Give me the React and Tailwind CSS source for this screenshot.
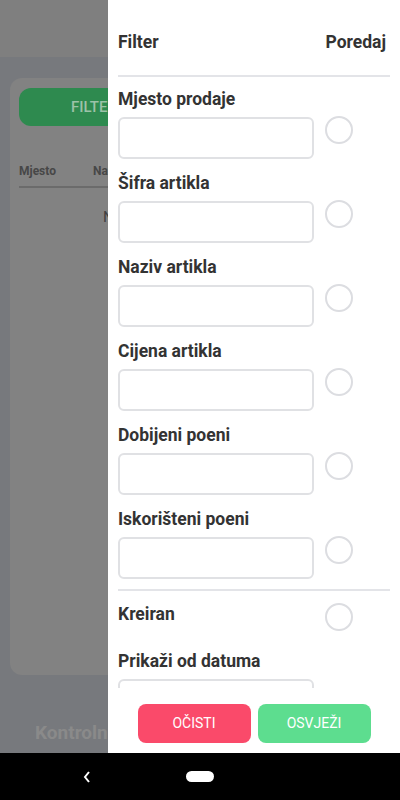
import React from "react";

const fields = [
  "Mjesto prodaje",
  "Šifra artikla",
  "Naziv artikla",
  "Cijena artikla",
  "Dobijeni poeni",
  "Iskorišteni poeni",
];

const Circle = () => (
  <div className="w-[28px] h-[28px] shrink-0 rounded-full border-2 border-[#dcdde1]" />
);

const FieldRow = ({ label, last }) => (
  <div className="flex flex-col">
    <p className="text-[17.5px] leading-[22px] font-bold text-[#333333]">{label}</p>
    <div className={`flex items-start gap-[11px] mt-[7px] ${last ? "mb-[10px]" : "mb-[13px]"}`}>
      <div className="w-[196px] h-[42px] rounded-md border-2 border-[#e0e1e4] bg-white" />
      <div className="-mt-px">
        <Circle />
      </div>
    </div>
  </div>
);

// pozadina aplikacije (zatamnjena ispod drawera)
const Background = () => (
  <div className="flex flex-col h-full bg-[#77797d]">
    <div className="h-[57px] bg-[#7f7f7f] shrink-0" />
    <div className="flex-1 flex flex-col px-[10px] pt-[21px]">
      <div className="h-[597px] rounded-xl bg-[#828282] px-[9px] pt-[10px]">
        <div className="h-[38px] rounded-xl bg-[#2e8a4f] flex items-center pl-[52px]">
          <span className="text-[15px] text-[#9cc2a8] font-medium">FILTER</span>
        </div>
        <div className="flex gap-[37px] mt-[36px] pb-[6px] border-b-2 border-[#6b6b6b]">
          <span className="text-[12px] font-bold text-[#474747]">Mjesto</span>
          <span className="text-[12px] font-bold text-[#474747]">Naziv</span>
        </div>
        <p className="mt-[18px] pl-[84px] text-[15px] text-[#404040]">Nema podataka</p>
      </div>
      <p className="mt-[44px] pl-[25px] text-[19px] font-bold text-[#8a8a8a]">Kontrolna tabla</p>
    </div>
  </div>
);

export default function App() {
  return (
    <div
      className="w-[400px] h-[800px] flex flex-col overflow-hidden"
      style={{ fontFamily: "Roboto, 'Noto Sans', sans-serif" }}
    >
      <div className="relative h-[753px] shrink-0">
        <Background />

        {/* Drawer */}
        <div className="absolute top-0 right-0 w-[292px] h-full bg-white flex flex-col">
          <div className="h-[688px] overflow-hidden px-[10px]">
            <div className="flex justify-between items-center pt-[31px] pb-[22px] border-b-2 border-[#e3e4e8]">
              <span className="text-[17.5px] leading-[22px] font-bold text-[#333333]">Filter</span>
              <span className="text-[17.5px] leading-[22px] font-bold text-[#333333] pr-[4px]">Poredaj</span>
            </div>
            <div className="pt-[11px]">
              {fields.map((f, i) => (
                <FieldRow key={f} label={f} last={i === fields.length - 1} />
              ))}
            </div>
            <div className="border-t-2 border-[#e3e4e8] pt-[12px]">
              <div className="flex items-start">
                <p className="w-[207px] text-[17.5px] leading-[22px] font-bold text-[#333333]">Kreiran</p>
                <Circle />
              </div>
              <p className="mt-[19px] text-[17.5px] leading-[22px] font-bold text-[#333333]">
                Prikaži od datuma
              </p>
              <div className="mt-[7px] w-[196px] h-[42px] rounded-md border-2 border-[#e0e1e4]" />
            </div>
          </div>
          <div className="flex justify-center gap-[7px] pt-[16px]">
            <button className="w-[113px] h-[39px] rounded-lg bg-[#fa4a6a] text-white text-[14px]">
              OČISTI
            </button>
            <button className="w-[113px] h-[39px] rounded-lg bg-[#5ddd8f] text-white text-[14px]">
              OSVJEŽI
            </button>
          </div>
        </div>
      </div>

      {/* Android navigacija */}
      <div className="flex-1 bg-black flex items-center pl-[82px] gap-[94px]">
        <svg width="10" height="14" viewBox="0 0 10 14">
          <path d="M7 2 L3 7 L7 12" stroke="white" strokeWidth="2" fill="none" />
        </svg>
        <div className="w-[28px] h-[11px] rounded-full bg-white" />
      </div>
    </div>
  );
}
